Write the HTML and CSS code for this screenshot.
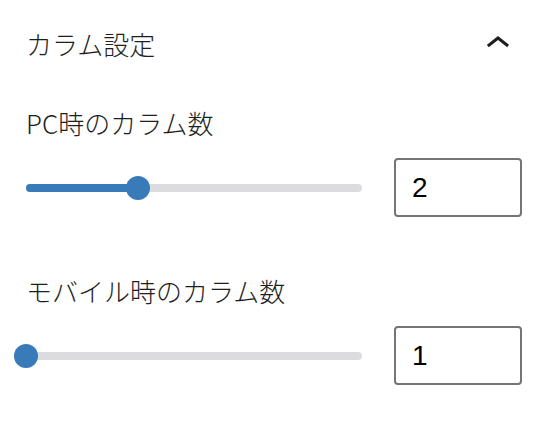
FILE: index.html
```
<!DOCTYPE html>
<html lang="ja">
<head>
<meta charset="utf-8">
<link rel="stylesheet" href="styles.css">
</head>
<body>
<div class="panel">
  <div class="panel-header">
    <h2 class="panel-title">カラム設定</h2>
    <span class="panel-toggle">
      <svg viewBox="0 0 24 24" width="48" height="48" aria-hidden="true"><path d="M6.5 12.4L12 8l5.5 4.4-.9 1.2L12 10l-4.6 3.6-1-1.2z"/></svg>
    </span>
  </div>
  <div class="panel-body">
    <div class="field">
      <label class="field-label">PC時のカラム数</label>
      <div class="range-row">
        <div class="range">
          <div class="range-track"></div>
          <div class="range-fill" style="width:33.333%"></div>
          <div class="range-thumb" style="left:33.333%"></div>
        </div>
        <input class="range-input" type="text" value="2">
      </div>
    </div>
    <div class="field">
      <label class="field-label">モバイル時のカラム数</label>
      <div class="range-row">
        <div class="range">
          <div class="range-track"></div>
          <div class="range-fill" style="width:0%"></div>
          <div class="range-thumb" style="left:0%"></div>
        </div>
        <input class="range-input" type="text" value="1">
      </div>
    </div>
  </div>
</div>
</body>
</html>
```
FILE: styles.css
```
html, body {
  margin: 0;
  background: #ffffff;
}
body {
  font-family: "Noto Sans CJK JP", "Noto Sans", sans-serif;
  color: #1e1e1e;
}
.panel {
  padding: 20px 20px 0 26px;
}
.panel-header {
  display: flex;
  justify-content: space-between;
  align-items: center;
  height: 48px;
}
.panel-title {
  margin: 0;
  font-size: 26px;
  font-weight: 300;
  line-height: 36px;
}
.panel-toggle {
  display: flex;
  width: 48px;
  height: 48px;
}
.panel-toggle svg {
  fill: #1e1e1e;
}
.panel-body {
  padding-top: 37px;
}
.field + .field {
  margin-top: 56px;
}
.field-label {
  display: block;
  font-size: 26px;
  font-weight: 300;
  line-height: 36px;
  margin-bottom: 17px;
}
.range-row {
  display: flex;
  align-items: center;
}
.range {
  position: relative;
  flex: 1;
  height: 24px;
  margin-right: 32px;
}
.range-track {
  position: absolute;
  left: 0;
  right: 0;
  top: 8px;
  height: 8px;
  border-radius: 4px;
  background: #dcdcde;
}
.range-fill {
  position: absolute;
  left: 0;
  top: 8px;
  height: 8px;
  border-radius: 4px;
  background: #387bb8;
}
.range-thumb {
  position: absolute;
  top: 0;
  width: 24px;
  height: 24px;
  margin-left: -12px;
  border-radius: 50%;
  background: #387bb8;
}
.range-input {
  box-sizing: border-box;
  width: 128px;
  height: 59px;
  margin: 0;
  padding: 0 0 0 16px;
  border: 2px solid #757575;
  border-radius: 4px;
  font-family: "Liberation Sans", Arial, sans-serif;
  font-size: 28px;
  color: #000000;
  background: #ffffff;
  outline: none;
}
```
